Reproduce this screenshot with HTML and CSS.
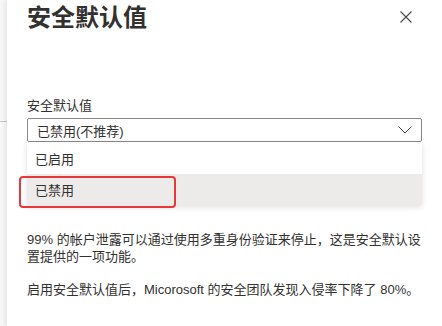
FILE: index.html
```html
<!DOCTYPE html>
<html lang="zh-CN">
<head>
  <meta charset="UTF-8">
  <title>安全默认值</title>
  <link rel="stylesheet" href="styles.css">
</head>
<body>
  <div class="backdrop">
    <div class="backdrop-line"></div>
  </div>

  <div class="panel">
    <div class="panel-header">
      <h1>安全默认值</h1>
      <button class="close-btn" aria-label="关闭">
        <svg width="12" height="12" viewBox="0 0 12 12">
          <path d="M0.5 0.5 L11.5 11.5 M11.5 0.5 L0.5 11.5" stroke="#484644" stroke-width="1.1" fill="none"/>
        </svg>
      </button>
    </div>

    <div class="field">
      <label class="field-label">安全默认值</label>
      <div class="select">
        <span>已禁用(不推荐)</span>
        <svg class="chevron" width="14" height="8" viewBox="0 0 14 8">
          <path d="M0.5 0.5 L7 7 L13.5 0.5" stroke="#484644" stroke-width="1" fill="none"/>
        </svg>
      </div>
      <ul class="options">
        <li class="option">已启用</li>
        <li class="option selected">已禁用<span class="highlight"></span></li>
      </ul>
    </div>

    <p class="desc">99% 的帐户泄露可以通过使用多重身份验证来停止，这是安全默认设<br>置提供的一项功能。</p>
    <p class="desc">启用安全默认值后，Micorosoft 的安全团队发现入侵率下降了 80%。</p>
  </div>
</body>
</html>
```

FILE: styles.css
```css
* {
  box-sizing: border-box;
}

body {
  margin: 0;
  height: 326px;
  display: flex;
  overflow: hidden;
  background: #f7f7f7;
  font-family: "Liberation Sans", "Noto Sans CJK SC", sans-serif;
  color: #323130;
}

.backdrop {
  width: 7px;
  padding-top: 121px;
}

.backdrop-line {
  height: 1px;
  background: #c8c6c4;
}

.panel {
  flex: 1;
  background: #fff;
  padding: 2px 20px 0 20px;
  box-shadow: -2px 0 5px rgba(0, 0, 0, 0.08);
}

.panel-header {
  display: flex;
  justify-content: space-between;
  align-items: flex-start;
  padding-right: 10px;
}

h1 {
  margin: 0;
  font-size: 24px;
  line-height: 32px;
  font-weight: 700;
  color: #323130;
}

.close-btn {
  border: none;
  background: none;
  padding: 0;
  margin-top: 9px;
  width: 12px;
  height: 12px;
  display: flex;
}

.field {
  margin-top: 63px;
}

.field-label {
  display: block;
  font-size: 13px;
  line-height: 18px;
  margin-bottom: 3px;
}

.select {
  height: 24px;
  border: 1px solid #8a8886;
  border-radius: 2px;
  padding: 0 8px 0 9px;
  display: flex;
  align-items: center;
  justify-content: space-between;
  font-size: 13px;
}

.chevron {
  margin-right: 1px;
}

.options {
  list-style: none;
  margin: 0;
  padding: 0;
  background: #fff;
  box-shadow: 0 2px 6px rgba(0, 0, 0, 0.13);
}

.option {
  position: relative;
  height: 32px;
  padding-left: 8px;
  display: flex;
  align-items: center;
  font-size: 13px;
}

.option.selected {
  height: 31px;
  background: #edebe9;
}

.highlight {
  position: absolute;
  left: -8px;
  top: 2px;
  width: 157px;
  height: 32px;
  border: 2.5px solid #e5383b;
  border-radius: 4px;
}

.desc {
  margin: 26px 0 0 0;
  font-size: 13px;
  line-height: 17px;
}

.desc + .desc {
  margin-top: 16px;
}
```
